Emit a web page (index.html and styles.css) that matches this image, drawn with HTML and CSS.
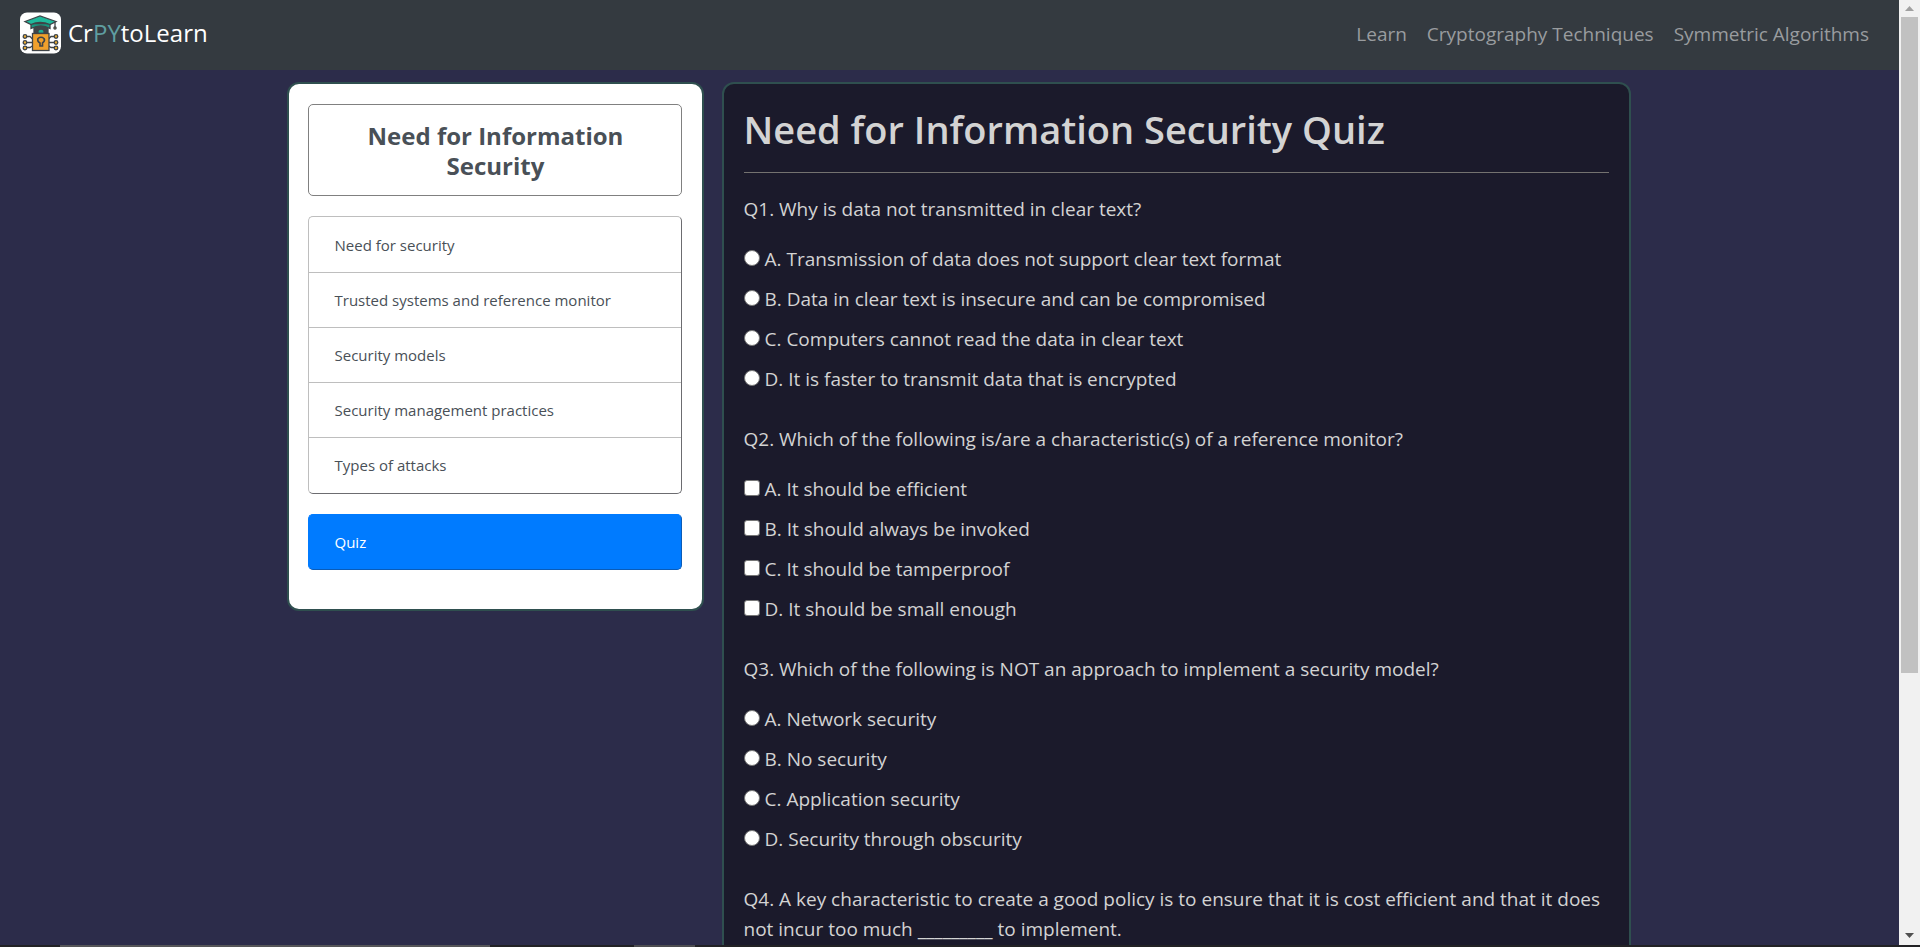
FILE: index.html
```html
<!DOCTYPE html>
<html lang="en">
<head>
<meta charset="utf-8">
<meta name="viewport" content="width=device-width, initial-scale=1">
<title>CrPYtoLearn</title>
<link rel="stylesheet" href="styles.css">
</head>
<body>
<div class="window">
  <div class="page">
    <header class="navbar">
      <a class="brand" href="#">
        <svg class="logo" viewBox="0 0 41 41" aria-hidden="true">
          <rect width="41" height="41" rx="7" fill="#fff"/>
          <g fill="none" stroke="#3f4448" stroke-width="1.3">
            <path d="M6 24h4l3 3M6 30h7M6 35h4l3-2M35 24h-4l-3 3M35 30h-7M35 35h-4l-3-2"/>
            <g fill="#efb032"><circle cx="5" cy="24" r="1.8"/><circle cx="5" cy="30" r="1.8"/><circle cx="5" cy="35.500" r="1.8"/><circle cx="36" cy="24" r="1.8"/><circle cx="36" cy="30" r="1.8"/><circle cx="36" cy="35.500" r="1.800"/></g>
            <path d="M14 14v7h14v-7z" fill="#3f4448"/>
            <path d="M18 21v-3q3-3 6 0v3z" fill="#1fae94"/>
            <path d="M11 11v5q10-5 19 0v-5z" fill="#17957f"/>
            <path d="M5 9L20 3.500L36 9L30 12Q20 8 11 12z" fill="#20b99c"/>
            <path d="M35 9.500v5"/><circle cx="35" cy="15.500" r="1.100" fill="#efb032"/>
            <rect x="12.500" y="21" width="16.500" height="17" fill="#f0a02c"/>
            <path d="M20 33.500h2.500v-3q3-2 1.500-4.500q-3-2.500-6 0q-1 3 2 4.500z" stroke-width="1.600"/>
          </g>
        </svg>
        <span>Cr<span class="accent">PY</span>toLearn</span>
      </a>
      <nav class="links">
        <a href="#">Learn</a>
        <a href="#">Cryptography Techniques</a>
        <a href="#">Symmetric Algorithms</a>
      </nav>
    </header>
    <div class="container">
      <aside class="sidebar">
        <h2 class="topic">Need for Information Security</h2>
        <nav class="list">
          <a href="#">Need for security</a>
          <a href="#">Trusted systems and reference monitor</a>
          <a href="#">Security models</a>
          <a href="#">Security management practices</a>
          <a href="#">Types of attacks</a>
        </nav>
        <a class="quiz-link" href="#">Quiz</a>
      </aside>
      <main class="quiz">
        <h1>Need for Information Security Quiz</h1>
        <hr>
        <form class="questions">
          <fieldset>
            <legend>Q1. Why is data not transmitted in clear text?</legend>
            <label><input type="radio" name="q1">A. Transmission of data does not support clear text format</label>
            <label><input type="radio" name="q1">B. Data in clear text is insecure and can be compromised</label>
            <label><input type="radio" name="q1">C. Computers cannot read the data in clear text</label>
            <label><input type="radio" name="q1">D. It is faster to transmit data that is encrypted</label>
          </fieldset>
          <fieldset>
            <legend>Q2. Which of the following is/are a characteristic(s) of a reference monitor?</legend>
            <label><input type="checkbox" name="q2">A. It should be efficient</label>
            <label><input type="checkbox" name="q2">B. It should always be invoked</label>
            <label><input type="checkbox" name="q2">C. It should be tamperproof</label>
            <label><input type="checkbox" name="q2">D. It should be small enough</label>
          </fieldset>
          <fieldset>
            <legend>Q3. Which of the following is NOT an approach to implement a security model?</legend>
            <label><input type="radio" name="q3">A. Network security</label>
            <label><input type="radio" name="q3">B. No security</label>
            <label><input type="radio" name="q3">C. Application security</label>
            <label><input type="radio" name="q3">D. Security through obscurity</label>
          </fieldset>
          <fieldset>
            <legend>Q4. A key characteristic to create a good policy is to ensure that it is cost efficient and that it does not incur too much _________ to implement.</legend>
          </fieldset>
        </form>
      </main>
    </div>
  </div>
  <div class="scrollbar" aria-hidden="true">
    <svg viewBox="0 0 21 17"><path d="M6 11h9l-4.500-5z" fill="#a0a0a0"/></svg>
    <div class="track"><div class="thumb"></div></div>
    <svg viewBox="0 0 21 17"><path d="M6 5h9l-4.500 5z" fill="#505050"/></svg>
  </div>
  <div class="taskbar" aria-hidden="true"><span class="task"></span><span class="task-active"></span></div>
</div>
</body>
</html>
```
FILE: styles.css
```css
* { box-sizing: border-box; }

body {
  margin: 0;
  font-family: "Open Sans", "Noto Sans", sans-serif;
  font-size: 19px;
  line-height: 30px;
  color: #d3d3d3;
  background: #2c2c4a;
}

a { color: inherit; text-decoration: none; }

.window {
  display: grid;
  grid-template-columns: minmax(0, 1fr) 21px;
  grid-template-rows: minmax(0, 1fr) 2px;
  height: 100vh;
}

.page { overflow: hidden; }

.navbar {
  display: flex;
  align-items: center;
  justify-content: space-between;
  padding: 10px 30px 12px 20px;
  min-height: 70px;
  background: #343a40;
}

.brand {
  display: flex;
  align-items: center;
  gap: 7px;
  padding-bottom: 2px;
  font-size: 24px;
  line-height: 32px;
  color: #fff;
}

.brand span { padding-bottom: 1px; }
.logo { width: 41px; height: 42px; }
.accent { color: #5f9ea0; }
.links { display: flex; gap: 20px; color: #999c9f; }

.container {
  display: grid;
  grid-template-columns: 417fr 909fr;
  gap: 18px;
  align-items: start;
  max-width: 1362px;
  margin: 12px auto 0;
  padding-left: 18px;
}

.sidebar, .quiz {
  border: 2px solid #2f4f4f;
  border-radius: 12px;
}

.sidebar {
  display: flex;
  flex-direction: column;
  gap: 20px;
  padding: 20px 20px 39px 19px;
  background: #fff;
  color: #495057;
  font-size: 15px;
}

.topic {
  margin: 0;
  padding: 16px 50px 14px 52px;
  border: 1px solid #808080;
  border-radius: 5px;
  font-size: 24px;
  font-weight: 700;
  line-height: 30px;
  text-align: center;
}

.list {
  padding: 1px 0;
  border: 1px solid #bebebe;
  border-right-color: #6c6c70;
  border-bottom-color: #6c6c70;
  border-radius: 5px;
}

.list a, .quiz-link { display: block; padding: 12px 26px; }
.list a + a { border-top: 1px solid #bebebe; }

.quiz-link {
  border: 1px solid #007bff;
  border-right-color: #0a5cb8;
  border-bottom-color: #0a5cb8;
  border-radius: 5px;
  background: #007bff;
  color: #fff;
}

.quiz { padding: 20px; background: #1b1a2b; }

h1 {
  margin: 0;
  font-size: 38px;
  font-weight: 600;
  line-height: 50px;
}

hr {
  margin: 18px 0 21px;
  border: 0;
  border-top: 1px solid #747270;
}

.questions { display: flex; flex-direction: column; gap: 30px; }
fieldset { min-width: 0; margin: 0; padding: 0; border: 0; }
legend { margin-bottom: 20px; padding: 0; }

label { display: flex; align-items: center; gap: 5px; }
label + label { margin-top: 10px; }

input {
  appearance: none;
  flex: none;
  width: 16px;
  height: 16px;
  margin: 0 0 2px;
  border: 1px solid #767676;
  border-radius: 3px;
  background: #fff;
}

input[type="radio"] { border-radius: 50%; }

.scrollbar {
  display: flex;
  flex-direction: column;
  background: #f1f1f1;
}

.scrollbar svg { height: 17px; }
.track { flex: 1; padding: 0 2px; }
.thumb { height: 72%; background: #c1c1c1; }

.taskbar {
  grid-column: 1 / -1;
  display: flex;
  gap: 144px;
  padding-left: 60px;
  background: #222225;
}

.task { width: 430px; background: #555558; }
.task-active { width: 61px; background: #4c4c50; }
```
